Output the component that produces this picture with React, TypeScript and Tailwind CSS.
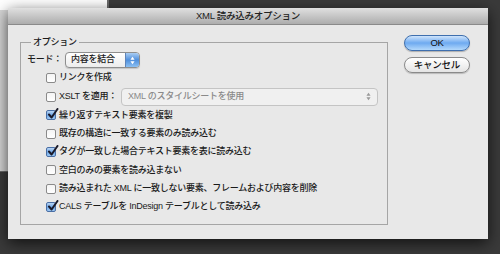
import React from "react";

const font = { fontFamily: '"Liberation Sans", "Noto Sans CJK JP", sans-serif' };

type Opt = { label: string; checked: boolean };

const options: Opt[] = [
  { label: "繰り返すテキスト要素を複製", checked: true },
  { label: "既存の構造に一致する要素のみ読み込む", checked: false },
  { label: "タグが一致した場合テキスト要素を表に読み込む", checked: true },
  { label: "空白のみの要素を読み込まない", checked: false },
  { label: "読み込まれた XML に一致しない要素、フレームおよび内容を削除", checked: false },
  { label: "CALS テーブルを InDesign テーブルとして読み込み", checked: true },
];

const Checkbox = ({ checked }: { checked: boolean }) =>
  checked ? (
    <span className="relative w-[10px] h-[10px] rounded-[2px] border border-[#4a6fa5] bg-gradient-to-b from-[#b9d6f5] via-[#6fa6e6] to-[#9cc8f4] shrink-0">
      <svg viewBox="0 0 12 12" className="absolute -top-[3px] left-[0px] w-[12px] h-[12px]">
        <path d="M2 6.5 L4.6 9.5 L10.5 1" fill="none" stroke="#1a1a2a" strokeWidth="2" strokeLinecap="round" strokeLinejoin="round" />
      </svg>
    </span>
  ) : (
    <span className="w-[10px] h-[10px] rounded-[2px] border border-[#8a8a8a] bg-gradient-to-b from-[#f4f4f4] to-white shrink-0" />
  );

const Arrows = ({ color }: { color: string }) => (
  <svg viewBox="0 0 6 10" className="w-[5px] h-[9px]">
    <path d="M3 0.5 L5.5 4 L0.5 4 Z" fill={color} />
    <path d="M3 9.5 L5.5 6 L0.5 6 Z" fill={color} />
  </svg>
);

const Row = ({ children }: { children: React.ReactNode }) => (
  <div className="flex items-center h-[18.3px] pl-[19px] gap-[3px]">{children}</div>
);

export default function App() {
  return (
    <div className="relative w-[500px] h-[254px] overflow-hidden bg-[#3a3a3a] text-[#1a1a1a] text-[9px] font-medium tracking-[-0.25px]" style={font}>
      {/* window behind */}
      <div className="absolute left-0 top-0 w-[109px] h-[172px] border-r-2 border-b border-[#6a6a6a] bg-[#d6d6d6]">
        <div className="h-[10px] bg-white" />
      </div>

      {/* dialog */}
      <div className="absolute left-[8px] top-[8px] w-[480px] h-[231px] flex flex-col bg-[#e8e8e8] shadow-[0_4px_14px_rgba(0,0,0,0.7)]">
        <div className="h-[17px] flex items-center justify-center bg-gradient-to-b from-[#e0e0e0] to-[#adadad] border-b border-[#8a8a8a] text-[9.5px] text-[#222]">
          XML 読み込みオプション
        </div>

        <div className="flex flex-1 pl-[12px] pr-[18px] pt-[11px]">
          <fieldset className="w-[368px] h-[189px] border border-[#a5a5a5] pl-[6px]">
            <legend className="ml-[4px] px-[2px] leading-[12px]">オプション</legend>

            <div className="flex items-center h-[18px] mt-[3px]">
              <span className="w-[38px]">モード：</span>
              <div className="flex items-stretch w-[75px] h-[16px] rounded-[4px] border border-[#8e8e8e] bg-gradient-to-b from-white to-[#ececec] overflow-hidden shadow-[0_1px_1px_rgba(0,0,0,0.15)]">
                <span className="flex-1 flex items-center pl-[5px]">内容を結合</span>
                <span className="w-[14px] flex items-center justify-center border-l border-[#5f84b8] bg-gradient-to-b from-[#a9cdf3] via-[#4f8fdc] to-[#8cc0f2]">
                  <Arrows color="#ffffff" />
                </span>
              </div>
            </div>

            <Row>
              <Checkbox checked={false} />
              <span>リンクを作成</span>
            </Row>

            <div className="flex items-center h-[19px] pl-[19px] gap-[3px]">
              <Checkbox checked={false} />
              <span className="w-[59px]">XSLT を適用：</span>
              <div className="flex items-center w-[257px] h-[18px] rounded-[4px] border border-[#c4c4c4] bg-[#f0f0f0] pl-[6px] pr-[6px] text-[#8a8a8a]">
                <span className="flex-1">XML のスタイルシートを使用</span>
                <Arrows color="#9a9a9a" />
              </div>
            </div>

            {options.map((o) => (
              <Row key={o.label}>
                <Checkbox checked={o.checked} />
                <span>{o.label}</span>
              </Row>
            ))}
          </fieldset>

          <div className="ml-auto flex flex-col gap-[6px] -mt-[1px]">
            <button className="w-[66px] h-[16px] rounded-full border border-[#3f6fae] bg-gradient-to-b from-[#cfe4fb] via-[#6eaaf0] to-[#b3d8fb] text-[9.5px] leading-none text-[#111] shadow-[0_1px_1px_rgba(0,0,0,0.25)]">
              OK
            </button>
            <button className="w-[66px] h-[16px] rounded-full border border-[#8a8a8a] bg-gradient-to-b from-white via-[#f2f2f2] to-[#e4e4e4] text-[9.5px] leading-none text-[#111] shadow-[0_1px_1px_rgba(0,0,0,0.2)]">
              キャンセル
            </button>
          </div>
        </div>
      </div>
    </div>
  );
}
